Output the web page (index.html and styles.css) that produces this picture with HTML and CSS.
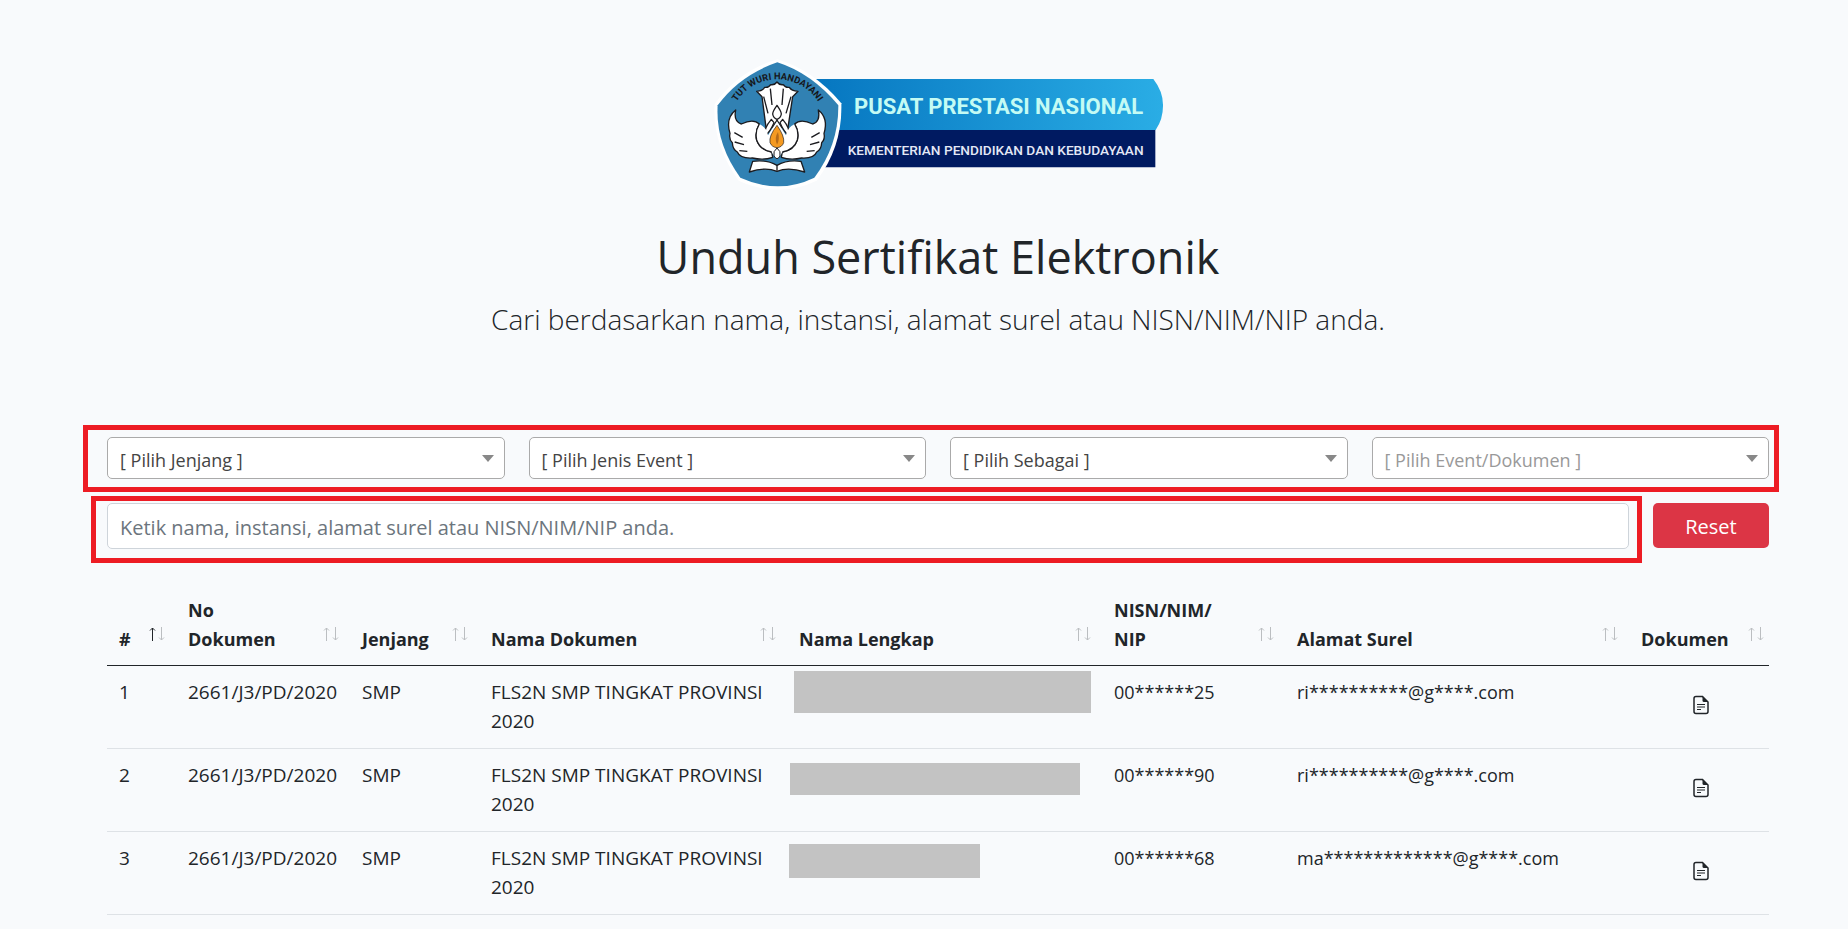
FILE: index.html
```html
<!DOCTYPE html>
<html lang="id">
<head>
	<meta charset="UTF-8">
	<title>Unduh Sertifikat Elektronik</title>
	<link rel="stylesheet" href="styles.css">
</head>
<body>
	<!-- shared icons -->
	<svg class="sprite" aria-hidden="true">
		<symbol id="sort" viewBox="0 0 16 14">
			<path class="up" d="M3.500 14V1M1 3.500L3.500 1L6 3.500"/>
			<path d="M12.500 0V13M10 10.500L12.500 13L15 10.500"/>
		</symbol>
		<symbol id="doc" viewBox="0 0 18 20">
			<path d="M4 1.500H10.500L16 7V16.500Q16 18.500 14 18.500H4Q2 18.500 2 16.500V3.500Q2 1.500 4 1.500Z" fill="none" stroke="#212529" stroke-width="1.500"/>
			<path d="M10.500 1.500V5.500Q10.500 7 12 7H16Z" fill="#212529"/>
			<path d="M5 9.500H13M5 12H13M5 14.500H9" fill="none" stroke="#212529" stroke-width="1.200"/>
		</symbol>
	</svg>

	<header class="top">
		<svg class="logo" viewBox="36 30 1356 384" role="img" aria-label="Pusat Prestasi Nasional">
			<defs>
				<linearGradient id="blue" x1="0" x2="1" y1="0" y2="0">
					<stop offset="0" stop-color="#0676c0"/>
					<stop offset="1" stop-color="#2aade5"/>
				</linearGradient>
				<path id="arc" d="M88 216A145 145 0 0 1 376 216"/>
			</defs>
			<path d="M340 87H1360Q1390 125 1389 168Q1389 208 1367 240H340Z" fill="url(#blue)"/>
			<path d="M340 240H1366V352H340Z" fill="#001a61"/>
			<path d="M232 28Q340 60 424 160Q428 290 350 392Q235 446 116 392Q36 280 44 162Q116 62 232 28Z" fill="#fff"/>
			<path d="M232 37Q335 70 415 166Q416 285 343 383Q235 435 121 383Q46 280 53 166Q120 75 232 37Z" fill="#3181b3"/>
			<text class="logo-motto"><textPath href="#arc" startOffset="50%">TUT WURI HANDAYANI</textPath></text>
			<g fill="#fff" stroke="#1b1b1f" stroke-width="4" stroke-linejoin="round">
				<path d="M148 366L158 334Q200 328 231 346Q262 328 303 334L314 366Q265 350 231 364Q196 350 148 366Z"/>
				<path d="M107 180Q100 215 124 222Q160 205 178 222Q164 245 170 270Q180 300 215 306L218 322Q190 332 157 324Q120 326 112 306Q98 298 97 278Q86 268 90 250Q76 205 107 180Z"/>
				<path d="M355 180Q362 215 338 222Q302 205 284 222Q298 245 292 270Q282 300 247 306L244 322Q272 332 305 324Q342 326 350 306Q364 298 365 278Q376 268 372 250Q386 205 355 180Z"/>
				<path d="M170 124Q190 122 194 112Q206 114 212 104Q224 106 231 96Q238 106 250 104Q256 114 268 112Q274 122 294 124L278 140L264 232Q250 222 244 232L231 210L218 232Q212 222 198 232L186 140Z"/>
				<path d="M191 140L204 190M211 116L216 165M250 116L246 165M273 140L258 190" fill="none"/>
				<path d="M231 166Q218 184 218 192Q220 204 231 208Q242 204 244 192Q244 184 231 166Z"/>
				<path d="M214 208Q190 236 196 256Q210 246 222 218ZM248 208Q272 236 266 256Q252 246 240 218Z"/>
				<path d="M178 222Q164 245 170 270Q180 300 215 306L222 318H240L247 306Q282 300 292 270Q298 245 284 222Q262 232 258 256L231 214L204 256Q200 232 178 222Z" stroke="none"/>
				<path d="M231 294Q218 304 222 318Q231 334 240 318Q244 304 231 294Z" stroke-width="3"/>
				<path d="M178 222Q164 245 170 270Q180 300 215 306M284 222Q298 245 292 270Q282 300 247 306" fill="none"/>
				<path d="M103 248L128 262M104 276L132 284M118 302L142 304M359 248L334 262M358 276L330 284M344 302L320 304M231 346V362" fill="none"/>
			</g>
			<path d="M231 226Q206 258 210 278Q216 292 231 293Q246 292 251 278Q254 258 231 226Z" fill="#f49a22" stroke="#1b1b1f" stroke-width="2"/>
			<path d="M234 246Q222 264 231 284Q240 268 234 246" fill="#b46a18"/>
			<text class="logo-name" x="462" y="191">PUSAT PRESTASI NASIONAL</text>
			<text class="logo-dept" x="443" y="315">KEMENTERIAN PENDIDIKAN DAN KEBUDAYAAN</text>
		</svg>
		<h1>Unduh Sertifikat Elektronik</h1>
		<p class="lead">Cari berdasarkan nama, instansi, alamat surel atau NISN/NIM/NIP anda.</p>
	</header>

	<main>
		<form>
			<div class="mark filters">
				<div class="select">
					<select aria-label="Jenjang"><option>[ Pilih Jenjang ]</option></select>
				</div>
				<div class="select">
					<select aria-label="Jenis Event"><option>[ Pilih Jenis Event ]</option></select>
				</div>
				<div class="select">
					<select aria-label="Sebagai"><option>[ Pilih Sebagai ]</option></select>
				</div>
				<div class="select">
					<select aria-label="Event/Dokumen" disabled><option>[ Pilih Event/Dokumen ]</option></select>
				</div>
			</div>
			<div class="search-row">
				<div class="mark search">
					<input type="text" aria-label="Cari" placeholder="Ketik nama, instansi, alamat surel atau NISN/NIM/NIP anda.">
				</div>
				<button type="reset">Reset</button>
			</div>
		</form>

		<table>
			<thead>
				<tr>
					<th class="c-num"><div class="th asc">#<svg><use href="#sort"/></svg></div></th>
					<th class="c-no"><div class="th">No<br>Dokumen<svg><use href="#sort"/></svg></div></th>
					<th class="c-level"><div class="th">Jenjang<svg><use href="#sort"/></svg></div></th>
					<th class="c-doc"><div class="th">Nama Dokumen<svg><use href="#sort"/></svg></div></th>
					<th class="c-name"><div class="th">Nama Lengkap<svg><use href="#sort"/></svg></div></th>
					<th class="c-id"><div class="th">NISN/NIM/<br>NIP<svg><use href="#sort"/></svg></div></th>
					<th class="c-mail"><div class="th">Alamat Surel<svg><use href="#sort"/></svg></div></th>
					<th class="c-file"><div class="th">Dokumen<svg><use href="#sort"/></svg></div></th>
				</tr>
			</thead>
			<tbody>
				<tr>
					<td>1</td>
					<td>2661/J3/PD/2020</td>
					<td>SMP</td>
					<td>FLS2N SMP TINGKAT PROVINSI 2020</td>
					<td class="name"><div class="mask mask-1"></div></td>
					<td class="private">00******25</td>
					<td class="private">ri**********@g****.com</td>
					<td class="file"><a href="#" aria-label="Unduh dokumen"><svg><use href="#doc"/></svg></a></td>
				</tr>
				<tr>
					<td>2</td>
					<td>2661/J3/PD/2020</td>
					<td>SMP</td>
					<td>FLS2N SMP TINGKAT PROVINSI 2020</td>
					<td class="name"><div class="mask mask-2"></div></td>
					<td class="private">00******90</td>
					<td class="private">ri**********@g****.com</td>
					<td class="file"><a href="#" aria-label="Unduh dokumen"><svg><use href="#doc"/></svg></a></td>
				</tr>
				<tr>
					<td>3</td>
					<td>2661/J3/PD/2020</td>
					<td>SMP</td>
					<td>FLS2N SMP TINGKAT PROVINSI 2020</td>
					<td class="name"><div class="mask mask-3"></div></td>
					<td class="private">00******68</td>
					<td class="private">ma*************@g****.com</td>
					<td class="file"><a href="#" aria-label="Unduh dokumen"><svg><use href="#doc"/></svg></a></td>
				</tr>
			</tbody>
		</table>
	</main>
</body>
</html>
```

FILE: styles.css
```css
*{box-sizing: border-box;}
body,h1,p{margin: 0;}
body{padding: 60px 79px 12px 107px;background: #f8fafc;color: #212529;font: 400 18px/29px "Open Sans","Noto Sans",sans-serif;}
.sprite{display: none;}

.top{text-align: center;}
.logo{display: block;width: 452px;height: 128px;margin: 0 auto 40px;overflow: visible;}
.logo text{font-family: "Roboto",sans-serif;}
.logo .logo-motto{font-size: 28px;font-weight: 700;text-anchor: middle;fill: #16161a;}
.logo .logo-name{font-size: 66px;font-weight: 700;fill: #c4fbf4;}
.logo .logo-dept{font-size: 41px;font-weight: 500;fill: #e4e8f6;}
h1{font-size: 45px;line-height: 58px;font-weight: 400;}
.lead{margin-top: 11px;font-size: 28px;line-height: 44px;font-weight: 300;}

/* filters */
form{margin-top: 84px;}
.mark{border: 5px solid #ed1c24;}
.filters{display: flex;gap: 24px;margin: 0 -10px 0 -24px;padding: 7px 5px 8px 19px;}
.select{position: relative;flex: 1;}
.select::after{content: "";position: absolute;top: 18px;right: 11px;border: 6px solid transparent;border-top: 7px solid #888;border-bottom: 0;pointer-events: none;}
select{display: block;width: 100%;height: 42px;padding: 4px 32px 0 12px;appearance: none;border: 1px solid #aaa;border-radius: 5px;background: #fff;color: #444;font: inherit;}
select:disabled{color: #999;opacity: 1;}
.search-row{display: flex;align-items: flex-start;gap: 11px;margin-top: 4px;margin-left: -16px;}
.search{flex: 1;padding: 2px 8px 9px 11px;}
.search input{display: block;width: 100%;height: 46px;padding: 2px 12px 0;border: 1px solid #ced4da;border-radius: 5px;background: #fff;color: #495057;font: inherit;font-size: 20px;}
.search input::placeholder{color: #6c757d;opacity: 1;}
button{width: 116px;height: 45px;margin-top: 7px;padding: 2px 0 0;border: 0;border-radius: 5px;background: #dc3545;color: #fff;font: inherit;font-size: 20px;}

/* table */
table{width: 100%;margin-top: 21px;border-collapse: separate;border-spacing: 0;table-layout: fixed;}
.c-num{width: 69px;}
.c-no{width: 174px;}
.c-level{width: 129px;}
.c-doc{width: 308px;}
.c-name{width: 315px;}
.c-id{width: 183px;}
.c-mail{width: 344px;}
.c-file{width: 140px;}
th,td{padding: 12px;text-align: left;vertical-align: top;}
th{padding-right: 0;padding-bottom: 11px;vertical-align: bottom;border-bottom: 1px solid #212529;white-space: nowrap;}
td{border-bottom: 1px solid #dee2e6;font-size: 19px;}
td.private{font-size: 18px;}
.th{position: relative;}
.th svg{position: absolute;right: 11px;bottom: 13px;width: 16px;height: 14px;fill: none;stroke: #bbbec1;}
.c-file .th svg{right: 5px;}
.up{stroke: var(--up);}
.asc{--up: #212529;}
td.name{padding: 5px 7px 0;}
.mask{background: #c3c3c3;}
.mask-1{width: 297px;height: 42px;}
.mask-2{width: 290px;height: 32px;margin-top: 9px;margin-left: -4px;}
.mask-3{width: 191px;height: 34px;margin-top: 7px;margin-left: -5px;}
td.file{padding: 28px 10px 0 14px;text-align: center;}
.file a{display: inline-block;line-height: 1;}
.file svg{display: block;width: 18px;height: 20px;}
```
